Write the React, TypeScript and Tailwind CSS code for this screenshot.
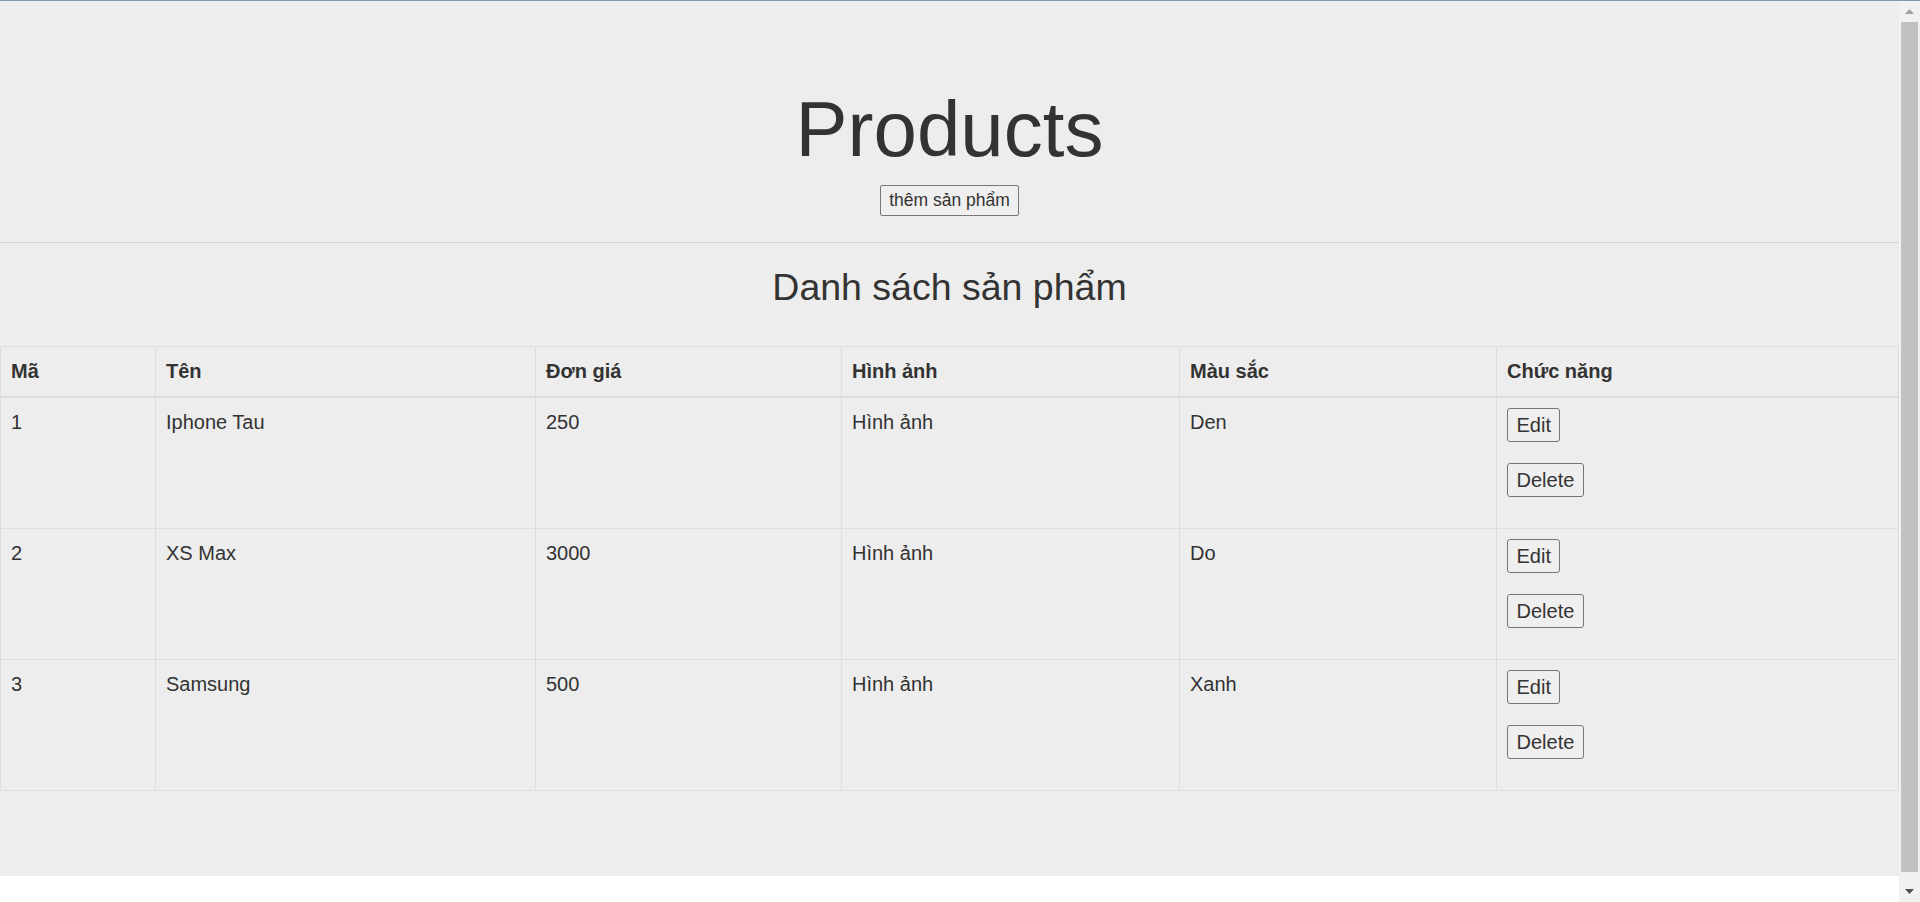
const products = [
  { id: 1, name: "Iphone Tau", price: 250, color: "Den" },
  { id: 2, name: "XS Max", price: 3000, color: "Do" },
  { id: 3, name: "Samsung", price: 500, color: "Xanh" },
];

const headers = ["Mã", "Tên", "Đơn giá", "Hình ảnh", "Màu sắc", "Chức năng"];

function Arrow({ up, color }: { up?: boolean; color: string }) {
  return (
    <svg width="9" height="5" viewBox="0 0 9 5">
      <polygon points={up ? "4.5,0 9,5 0,5" : "0,0 9,0 4.5,5"} fill={color} />
    </svg>
  );
}

function Scrollbar() {
  return (
    <div className="w-[21px] bg-[#f1f1f1] flex flex-col">
      <div className="h-[21px] flex items-center justify-center">
        <Arrow up color="#a3a3a3" />
      </div>
      <div className="h-[850px] mx-[2px] bg-[#c1c1c1]" />
      <div className="flex-1" />
      <div className="h-[21px] flex items-center justify-center">
        <Arrow color="#505050" />
      </div>
    </div>
  );
}

function ActionButton({ label }: { label: string }) {
  return (
    <div className="mb-[21px]">
      <button className="px-[8.5px] py-[2px] leading-[28px] text-[20px] text-[#333] bg-[#efefef] border border-[#767676] rounded-[3px]">
        {label}
      </button>
    </div>
  );
}

export default function App() {
  return (
    <div className="w-[1920px] h-[902px] overflow-hidden bg-white flex flex-col font-['Liberation_Sans',Arial,sans-serif] text-[#333]">
      <div className="h-px bg-[#7c9bb0]" />
      <div className="flex flex-1">
        <div className="flex-1">
          <div className="h-[875px] bg-[#ededed] pt-[84px]">
            <h1 className="text-center text-[78px] leading-[88px] font-normal">Products</h1>
            <div className="flex justify-center mt-[12px]">
              <button className="px-[8px] py-[2px] text-[17.5px] leading-[25px] text-[#333] bg-[#efefef] border border-[#767676] rounded-[2px]">
                thêm sản phẩm
              </button>
            </div>
            <hr className="mt-[26px] border-0 border-t border-[#d6d6d6]" />
            <h2 className="mt-[24px] mb-[38px] text-center text-[37.5px] leading-[41px] font-normal">
              Danh sách sản phẩm
            </h2>
            <table className="w-full table-fixed border-collapse border border-[#dddddd] text-[20px] leading-[29px]">
              <colgroup>
                <col className="w-[155px]" />
                <col className="w-[380px]" />
                <col className="w-[306px]" />
                <col className="w-[338px]" />
                <col className="w-[317px]" />
                <col />
              </colgroup>
              <thead>
                <tr>
                  {headers.map((h) => (
                    <th
                      key={h}
                      className="text-left font-bold p-[10px] border border-[#dddddd] border-b-2"
                    >
                      {h}
                    </th>
                  ))}
                </tr>
              </thead>
              <tbody>
                {products.map((p) => (
                  <tr key={p.id}>
                    <td className="align-top p-[10px] border border-[#dddddd]">{p.id}</td>
                    <td className="align-top p-[10px] border border-[#dddddd]">{p.name}</td>
                    <td className="align-top p-[10px] border border-[#dddddd]">{p.price}</td>
                    <td className="align-top p-[10px] border border-[#dddddd]">Hình ảnh</td>
                    <td className="align-top p-[10px] border border-[#dddddd]">{p.color}</td>
                    <td className="align-top p-[10px] border border-[#dddddd]">
                      <ActionButton label="Edit" />
                      <ActionButton label="Delete" />
                    </td>
                  </tr>
                ))}
              </tbody>
            </table>
          </div>
        </div>
        <Scrollbar />
      </div>
    </div>
  );
}
